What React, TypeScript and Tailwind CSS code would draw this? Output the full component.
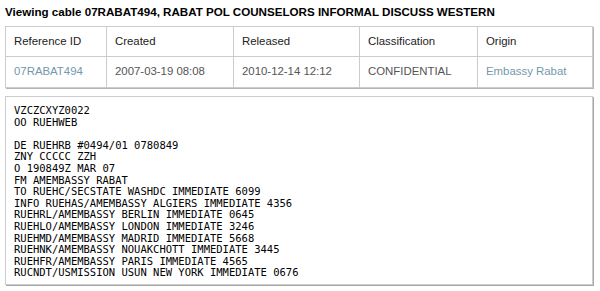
const cable = `VZCZCXYZ0022
OO RUEHWEB

DE RUEHRB #0494/01 0780849
ZNY CCCCC ZZH
O 190849Z MAR 07
FM AMEMBASSY RABAT
TO RUEHC/SECSTATE WASHDC IMMEDIATE 6099
INFO RUEHAS/AMEMBASSY ALGIERS IMMEDIATE 4356
RUEHRL/AMEMBASSY BERLIN IMMEDIATE 0645
RUEHLO/AMEMBASSY LONDON IMMEDIATE 3246
RUEHMD/AMEMBASSY MADRID IMMEDIATE 5668
RUEHNK/AMEMBASSY NOUAKCHOTT IMMEDIATE 3445
RUEHFR/AMEMBASSY PARIS IMMEDIATE 4565
RUCNDT/USMISSION USUN NEW YORK IMMEDIATE 0676`;

export default function App() {
  const th = "border border-[#cccccc] px-[8px] text-left font-normal text-[#222]";
  const td = "border border-[#cccccc] px-[8px] text-left";

  return (
    <div className="w-[600px] h-[291px] bg-white px-[5px] pt-[4px] font-['Liberation_Sans',Arial,sans-serif]">
      <h1 className="text-[11.6px] font-bold leading-[16px] text-black">
        Viewing cable 07RABAT494, RABAT POL COUNSELORS INFORMAL DISCUSS WESTERN
      </h1>
      <table className="mt-[6px] w-[588px] border-collapse text-[11.4px] shadow-[1px_1px_0_#b5b5b5]">
        <thead>
          <tr className="h-[30px]">
            <th className={`${th} w-[101px]`}>Reference ID</th>
            <th className={`${th} w-[127px]`}>Created</th>
            <th className={`${th} w-[126px]`}>Released</th>
            <th className={`${th} w-[118px]`}>Classification</th>
            <th className={th}>Origin</th>
          </tr>
        </thead>
        <tbody>
          <tr className="h-[31px]">
            <td className={`${td} text-[#7399aa]`}>07RABAT494</td>
            <td className={`${td} text-[#555]`}>2007-03-19 08:08</td>
            <td className={`${td} text-[#555]`}>2010-12-14 12:12</td>
            <td className={`${td} text-[#555]`}>CONFIDENTIAL</td>
            <td className={`${td} text-[#7399aa]`}>Embassy Rabat</td>
          </tr>
        </tbody>
      </table>
      <div className="mt-[8px] h-[189px] w-[588px] border border-[#cccccc] shadow-[1px_1px_0_#a8a8a8] px-[8px] pt-[8px]">
        <pre className="font-['DejaVu_Sans_Mono',monospace] text-[10.5px] leading-[11.6px] text-black">
          {cable}
        </pre>
      </div>
    </div>
  );
}
